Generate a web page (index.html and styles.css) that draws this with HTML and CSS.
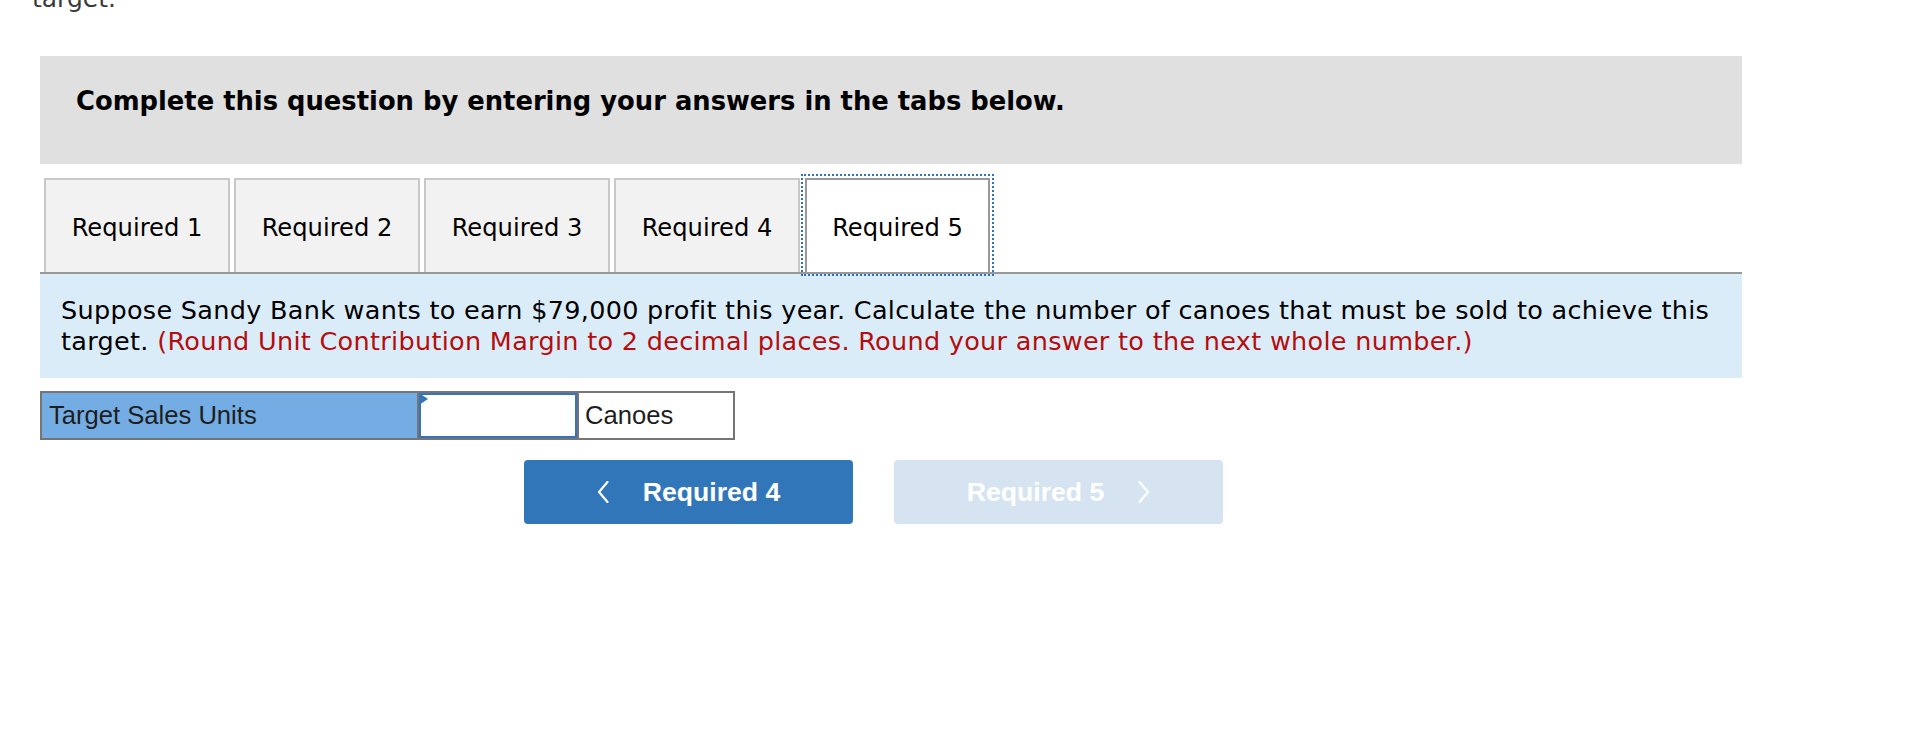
FILE: index.html
```html
<!DOCTYPE html>
<html lang="en">
<head>
<meta charset="utf-8">
<title>Required 5</title>
<link rel="stylesheet" href="styles.css">
</head>
<body>
<div class="page">
  <div class="cut-line">target.</div>

  <div class="prompt">
    <h2 class="prompt-title">Complete this question by entering your answers in the tabs below.</h2>
  </div>

  <div class="tabs">
    <div class="tab">Required 1</div>
    <div class="tab">Required 2</div>
    <div class="tab">Required 3</div>
    <div class="tab">Required 4</div>
    <div class="tab tab-active">Required 5</div>
  </div>

  <div class="question">
    Suppose Sandy Bank wants to earn $79,000 profit this year. Calculate the number of canoes that must be sold to achieve this target. <span class="hint">(Round Unit Contribution Margin to 2 decimal places. Round your answer to the next whole number.)</span>
  </div>

  <div class="answer-row">
    <div class="cell-label">Target Sales Units</div>
    <div class="cell-input"><span class="flag"></span></div>
    <div class="cell-unit">Canoes</div>
  </div>

  <div class="nav">
    <div class="nav-btn nav-prev">
      <svg class="chev" width="12" height="22" viewBox="0 0 12 22"><polyline points="10.5,1 2,11 10.5,21" fill="none" stroke="#ffffff" stroke-width="2.2" stroke-linecap="round" stroke-linejoin="round"/></svg>
      <span>Required 4</span>
    </div>
    <div class="nav-btn nav-next">
      <span>Required 5</span>
      <svg class="chev" width="12" height="22" viewBox="0 0 12 22"><polyline points="1.5,1 10,11 1.5,21" fill="none" stroke="#ffffff" stroke-width="2.2" stroke-linecap="round" stroke-linejoin="round"/></svg>
    </div>
  </div>
</div>
</body>
</html>
```

FILE: styles.css
```css
* { box-sizing: border-box; }

html, body {
  margin: 0;
  padding: 0;
  background: #ffffff;
}

body {
  font-family: "DejaVu Sans", Verdana, sans-serif;
  color: #000000;
  overflow: hidden;
}

.page {
  padding-left: 40px;
  width: 1742px;
}

.cut-line {
  margin-top: -16px;
  margin-left: -8px;
  font-size: 25px;
  line-height: 30px;
  color: #3a3a3a;
}

.prompt {
  margin-top: 42px;
  height: 108px;
  background: #e0e0e0;
  padding: 30px 36px 0 36px;
}

.prompt-title {
  margin: 0;
  font-size: 25.8px;
  line-height: 30px;
  font-weight: bold;
}

.tabs {
  margin-top: 14px;
  display: flex;
  gap: 4px;
  padding-left: 4px;
  border-bottom: 2px solid #999999;
}

.tab {
  width: 186px;
  height: 94px;
  border: 2px solid #c8c8c8;
  border-bottom: none;
  background: #f2f2f2;
  display: flex;
  align-items: center;
  justify-content: center;
  font-size: 24.2px;
  padding-top: 4px;
}

.tab-active {
  width: 185px;
  margin-left: 1px;
  background: #ffffff;
  border-color: #999999;
  outline: 2px dotted #2f72c4;
  outline-offset: 2px;
}

.question {
  background: #dbecf9;
  padding: 21px 4px 21px 21px;
  font-size: 25.5px;
  letter-spacing: 0.3px;
  line-height: 31px;
}

.hint {
  color: #b50d0d;
}

.answer-row {
  margin-top: 13px;
  display: flex;
  width: 695px;
  height: 49px;
  border: 2px solid #757575;
  font-family: "Liberation Sans", Arial, sans-serif;
  font-size: 25.6px;
  color: #1e1e1e;
}

.cell-label {
  width: 377px;
  background: #74ade3;
  border-right: 2px solid #757575;
  padding-left: 7px;
  display: flex;
  align-items: center;
}

.cell-input {
  position: relative;
  width: 158px;
  border: 2px solid #3574bd;
  background: #ffffff;
}

.flag {
  position: absolute;
  top: -2px;
  left: -2px;
  width: 0;
  height: 0;
  border-left: 9px solid #3574bd;
  border-top: 6px solid transparent;
  border-bottom: 6px solid transparent;
}

.cell-unit {
  flex: 1;
  border-left: 2px solid #757575;
  padding-left: 6px;
  display: flex;
  align-items: center;
}

.nav {
  margin-top: 20px;
  display: flex;
  gap: 41px;
  padding-left: 484px;
}

.nav-btn {
  width: 329px;
  height: 64px;
  border-radius: 4px;
  display: flex;
  align-items: center;
  justify-content: center;
  gap: 34px;
  font-family: "Liberation Sans", Arial, sans-serif;
  font-weight: bold;
  font-size: 26.6px;
  color: #ffffff;
}

.nav-prev {
  background: #3276ba;
}

.nav-next {
  background: #d6e4f1;
}

.chev {
  display: block;
}
```
